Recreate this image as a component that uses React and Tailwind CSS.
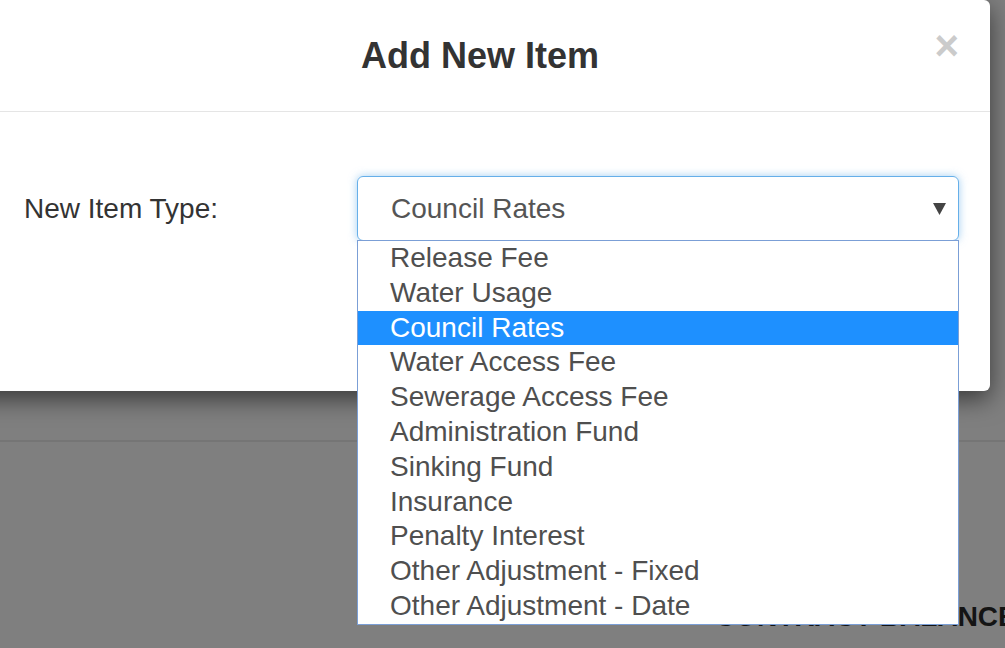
import { useState } from "react";

const options = [
  "Release Fee",
  "Water Usage",
  "Council Rates",
  "Water Access Fee",
  "Sewerage Access Fee",
  "Administration Fund",
  "Sinking Fund",
  "Insurance",
  "Penalty Interest",
  "Other Adjustment - Fixed",
  "Other Adjustment - Date",
];

function App() {
  const [selected, setSelected] = useState("Council Rates");

  return (
    <div className="relative h-[648px] w-full overflow-hidden bg-[#7f7f7f] font-['Liberation_Sans',Arial,sans-serif]">
      {/* page behind the backdrop */}
      <div className="pt-[440px]">
        <div className="h-[2px] bg-[#757575]" />
        <div className="pt-[159px] pl-[715px] whitespace-nowrap text-[28px] font-bold leading-[32px] text-[#141414]">
          CONTRACT BALANCE
        </div>
      </div>

      {/* modal */}
      <div className="absolute top-0 left-[-30px] w-[1020px] rounded-md bg-white shadow-[0_8px_24px_rgba(0,0,0,0.55)]">
        <div className="relative flex h-[112px] items-center justify-center border-b border-[#e5e5e5]">
          <h4 className="text-[36px] font-bold leading-none text-[#333]">Add New Item</h4>
          <button className="absolute top-[25px] right-[31px] text-[42px] font-bold leading-none text-[#cbcbcb]">
            ×
          </button>
        </div>

        <div className="pt-[64px] pr-[31px] pb-[35px] pl-[54px]">
          <div className="flex items-center">
            <label className="w-[333px] text-[28px] text-[#333]">New Item Type:</label>
            <div className="relative flex-1">
              <div className="flex h-[65px] items-center justify-between rounded-md border border-[#66afe9] pr-[12px] pl-[33px] shadow-[0_0_8px_rgba(102,175,233,0.6)]">
                <span className="text-[28px] text-[#555]">{selected}</span>
                <svg width="13" height="12" viewBox="0 0 13 12">
                  <polygon points="0,0 13,0 6.5,12" fill="#444" />
                </svg>
              </div>
              <ul className="absolute top-[64px] right-0 left-0 z-10 border border-[#7b9fd6] bg-white">
                {options.map((o) => (
                  <li
                    key={o}
                    onClick={() => setSelected(o)}
                    className={
                      o === selected
                        ? "h-[34.8px] pl-[32px] text-[28px] leading-[34.8px] whitespace-nowrap bg-[#1e90ff] text-white"
                        : "h-[34.8px] pl-[32px] text-[28px] leading-[34.8px] whitespace-nowrap text-[#4f4f4f]"
                    }
                  >
                    {o}
                  </li>
                ))}
              </ul>
            </div>
          </div>
          <div className="mt-[56px] flex justify-end">
            <button className="h-[59px] w-[160px] rounded-md border border-[#2e6da4] bg-[#337ab7] text-[28px] text-white">
              Add
            </button>
          </div>
        </div>
      </div>
    </div>
  );
}

export default App;
